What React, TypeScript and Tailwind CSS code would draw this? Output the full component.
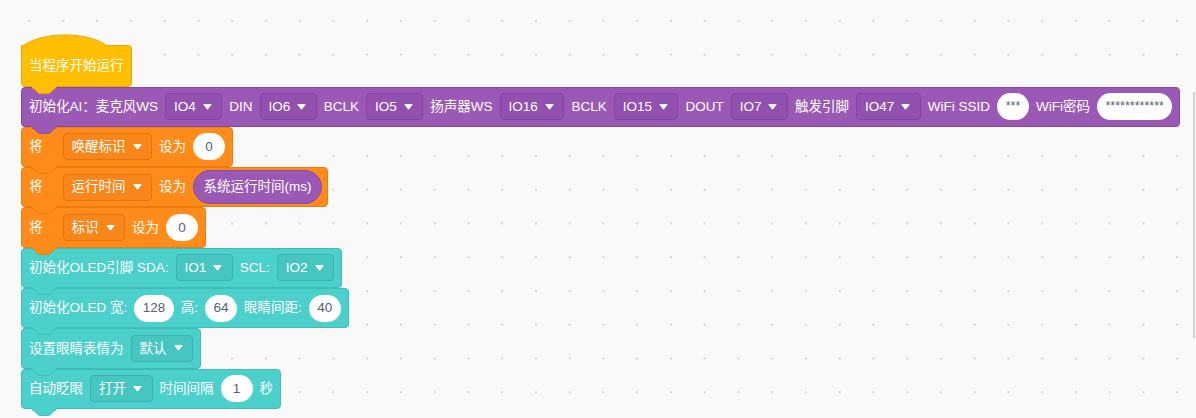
import type { ReactNode } from 'react';

type Tone = {
  block: string;
  field: string;
  fill: string;
  stroke: string;
};

const purple: Tone = {
  block: 'bg-[#9b59b6] border-[#8a48a6]',
  field: 'bg-[#9251ae] border-[#8544a1]',
  fill: '#9b59b6',
  stroke: '#8a48a6',
};

const orange: Tone = {
  block: 'bg-[#ff8c1a] border-[#e97d0f]',
  field: 'bg-[#f8861a] border-[#e2760c]',
  fill: '#ff8c1a',
  stroke: '#e97d0f',
};

const teal: Tone = {
  block: 'bg-[#4cd0cb] border-[#40bcb7]',
  field: 'bg-[#47c6c1] border-[#3bb2ad]',
  fill: '#4cd0cb',
  stroke: '#40bcb7',
};

// connector tab hanging under a stack block
function Tab({ tone }: { tone: Tone }) {
  return (
    <svg className="absolute left-[10px] top-full z-10" width="25" height="8" viewBox="0 0 25 8">
      <path
        d="M0 0 H24.3 V2 C22.95 2 22.28 2.68 21.6 3.35 L18.9 6.05 C18.23 6.73 17.55 7.4 16.2 7.4 H8.1 C6.75 7.4 6.08 6.73 5.4 6.05 L2.7 3.35 C2.03 2.68 1.35 2 0 2 Z"
        fill={tone.fill}
      />
      <path
        d="M0 2 C1.35 2 2.03 2.68 2.7 3.35 L5.4 6.05 C6.08 6.73 6.75 7.4 8.1 7.4 H16.2 C17.55 7.4 18.23 6.73 18.9 6.05 L21.6 3.35 C22.28 2.68 22.95 2 24.3 2"
        fill="none"
        stroke={tone.stroke}
        strokeWidth="1"
      />
    </svg>
  );
}

function Arrow() {
  return (
    <svg width="9" height="6" viewBox="0 0 9 6">
      <path d="M0.8 0.6 H8.2 L4.5 5.2 Z" fill="white" stroke="white" strokeWidth="1" strokeLinejoin="round" />
    </svg>
  );
}

function Dropdown({ tone, children }: { tone: Tone; children: ReactNode }) {
  return (
    <div className={`flex h-[27px] items-center gap-[7px] rounded-[4px] border pl-[8px] pr-[9.5px] text-white ${tone.field}`}>
      <span>{children}</span>
      <Arrow />
    </div>
  );
}

function Oval({ children }: { children: ReactNode }) {
  return (
    <div className="flex h-[27px] min-w-[32px] items-center justify-center rounded-full bg-white px-[8.5px] text-[#575e75]">
      {children}
    </div>
  );
}

function Label({ children, className = '' }: { children: ReactNode; className?: string }) {
  return <span className={`whitespace-nowrap text-white ${className}`}>{children}</span>;
}

function Block({ tone, children, tight = false }: { tone: Tone; children: ReactNode; tight?: boolean }) {
  return (
    <div
      className={`relative flex h-[40.3px] items-center gap-[7px] rounded-[4px] border pl-[7px] ${tight ? 'pr-[5px]' : 'pr-[7px]'} ${tone.block}`}
    >
      {children}
      <Tab tone={tone} />
    </div>
  );
}

function HatBlock({ children }: { children: ReactNode }) {
  const hat: Tone = { block: '', field: '', fill: '#ffbf00', stroke: '#e6ab00' };
  return (
    <div className="relative flex h-[41.5px] items-center rounded-[4px] rounded-tl-none border border-[#e6ab00] bg-[#ffbf00] pl-[7px] pr-[7px]">
      <svg className="absolute bottom-[calc(100%-1px)] left-[-1px]" width="88" height="13" viewBox="0 0 88 13">
        <path d="M0.5 13 C20 -3 67 -3 87.5 13 Z" fill="#ffbf00" />
        <path d="M0.5 13 C20 -3 67 -3 87.5 12.5" fill="none" stroke="#e6ab00" strokeWidth="1" />
      </svg>
      <Label>{children}</Label>
      <Tab tone={hat} />
    </div>
  );
}

export default function App() {
  return (
    <div
      className="relative h-[418px] w-[1196px] overflow-hidden bg-[#f9f9f9] bg-[radial-gradient(circle,#d6d6d6_0.9px,transparent_1.3px)] bg-size-[33.75px_33.75px] bg-position-[12.8px_4.1px] text-[13.5px] leading-none"
      style={{ fontFamily: '"Liberation Sans", "Noto Sans CJK SC", sans-serif' }}
    >
      <div className="flex flex-col items-start pl-[21px] pt-[45px]">
        <HatBlock>当程序开始运行</HatBlock>

        <Block tone={purple}>
          <Label>初始化AI：麦克风WS</Label>
          <Dropdown tone={purple}>IO4</Dropdown>
          <Label>DIN</Label>
          <Dropdown tone={purple}>IO6</Dropdown>
          <Label>BCLK</Label>
          <Dropdown tone={purple}>IO5</Dropdown>
          <Label>扬声器WS</Label>
          <Dropdown tone={purple}>IO16</Dropdown>
          <Label>BCLK</Label>
          <Dropdown tone={purple}>IO15</Dropdown>
          <Label>DOUT</Label>
          <Dropdown tone={purple}>IO7</Dropdown>
          <Label>触发引脚</Label>
          <Dropdown tone={purple}>IO47</Dropdown>
          <Label>WiFi SSID</Label>
          <Oval>
            <span className="text-[12.5px]">***</span>
          </Oval>
          <Label>WiFi密码</Label>
          <Oval>
            <span className="text-[12.5px]">************</span>
          </Oval>
        </Block>

        <Block tone={orange}>
          <Label className="mr-[13px]">将</Label>
          <Dropdown tone={orange}>唤醒标识</Dropdown>
          <Label>设为</Label>
          <Oval>0</Oval>
        </Block>

        <Block tone={orange} tight>
          <Label className="mr-[13px]">将</Label>
          <Dropdown tone={orange}>运行时间</Dropdown>
          <Label>设为</Label>
          <div className="flex h-[34px] items-center rounded-full border border-[#8a48a6] bg-[#9b59b6] px-[9.5px] text-white">
            系统运行时间(ms)
          </div>
        </Block>

        <Block tone={orange}>
          <Label className="mr-[13px]">将</Label>
          <Dropdown tone={orange}>标识</Dropdown>
          <Label>设为</Label>
          <Oval>0</Oval>
        </Block>

        <Block tone={teal}>
          <Label>初始化OLED引脚 SDA:</Label>
          <Dropdown tone={teal}>IO1</Dropdown>
          <Label>SCL:</Label>
          <Dropdown tone={teal}>IO2</Dropdown>
        </Block>

        <Block tone={teal}>
          <Label>初始化OLED 宽:</Label>
          <Oval>128</Oval>
          <Label>高:</Label>
          <Oval>64</Oval>
          <Label>眼睛间距:</Label>
          <Oval>40</Oval>
        </Block>

        <Block tone={teal}>
          <Label>设置眼睛表情为</Label>
          <Dropdown tone={teal}>默认</Dropdown>
        </Block>

        <Block tone={teal}>
          <Label>自动眨眼</Label>
          <Dropdown tone={teal}>打开</Dropdown>
          <Label>时间间隔</Label>
          <Oval>1</Oval>
          <Label>秒</Label>
        </Block>
      </div>

      {/* workspace scrollbar */}
      <div className="absolute right-[1px] top-[92px] h-[246px] w-[2px] rounded-full bg-[#d2d2d2]" />
    </div>
  );
}
